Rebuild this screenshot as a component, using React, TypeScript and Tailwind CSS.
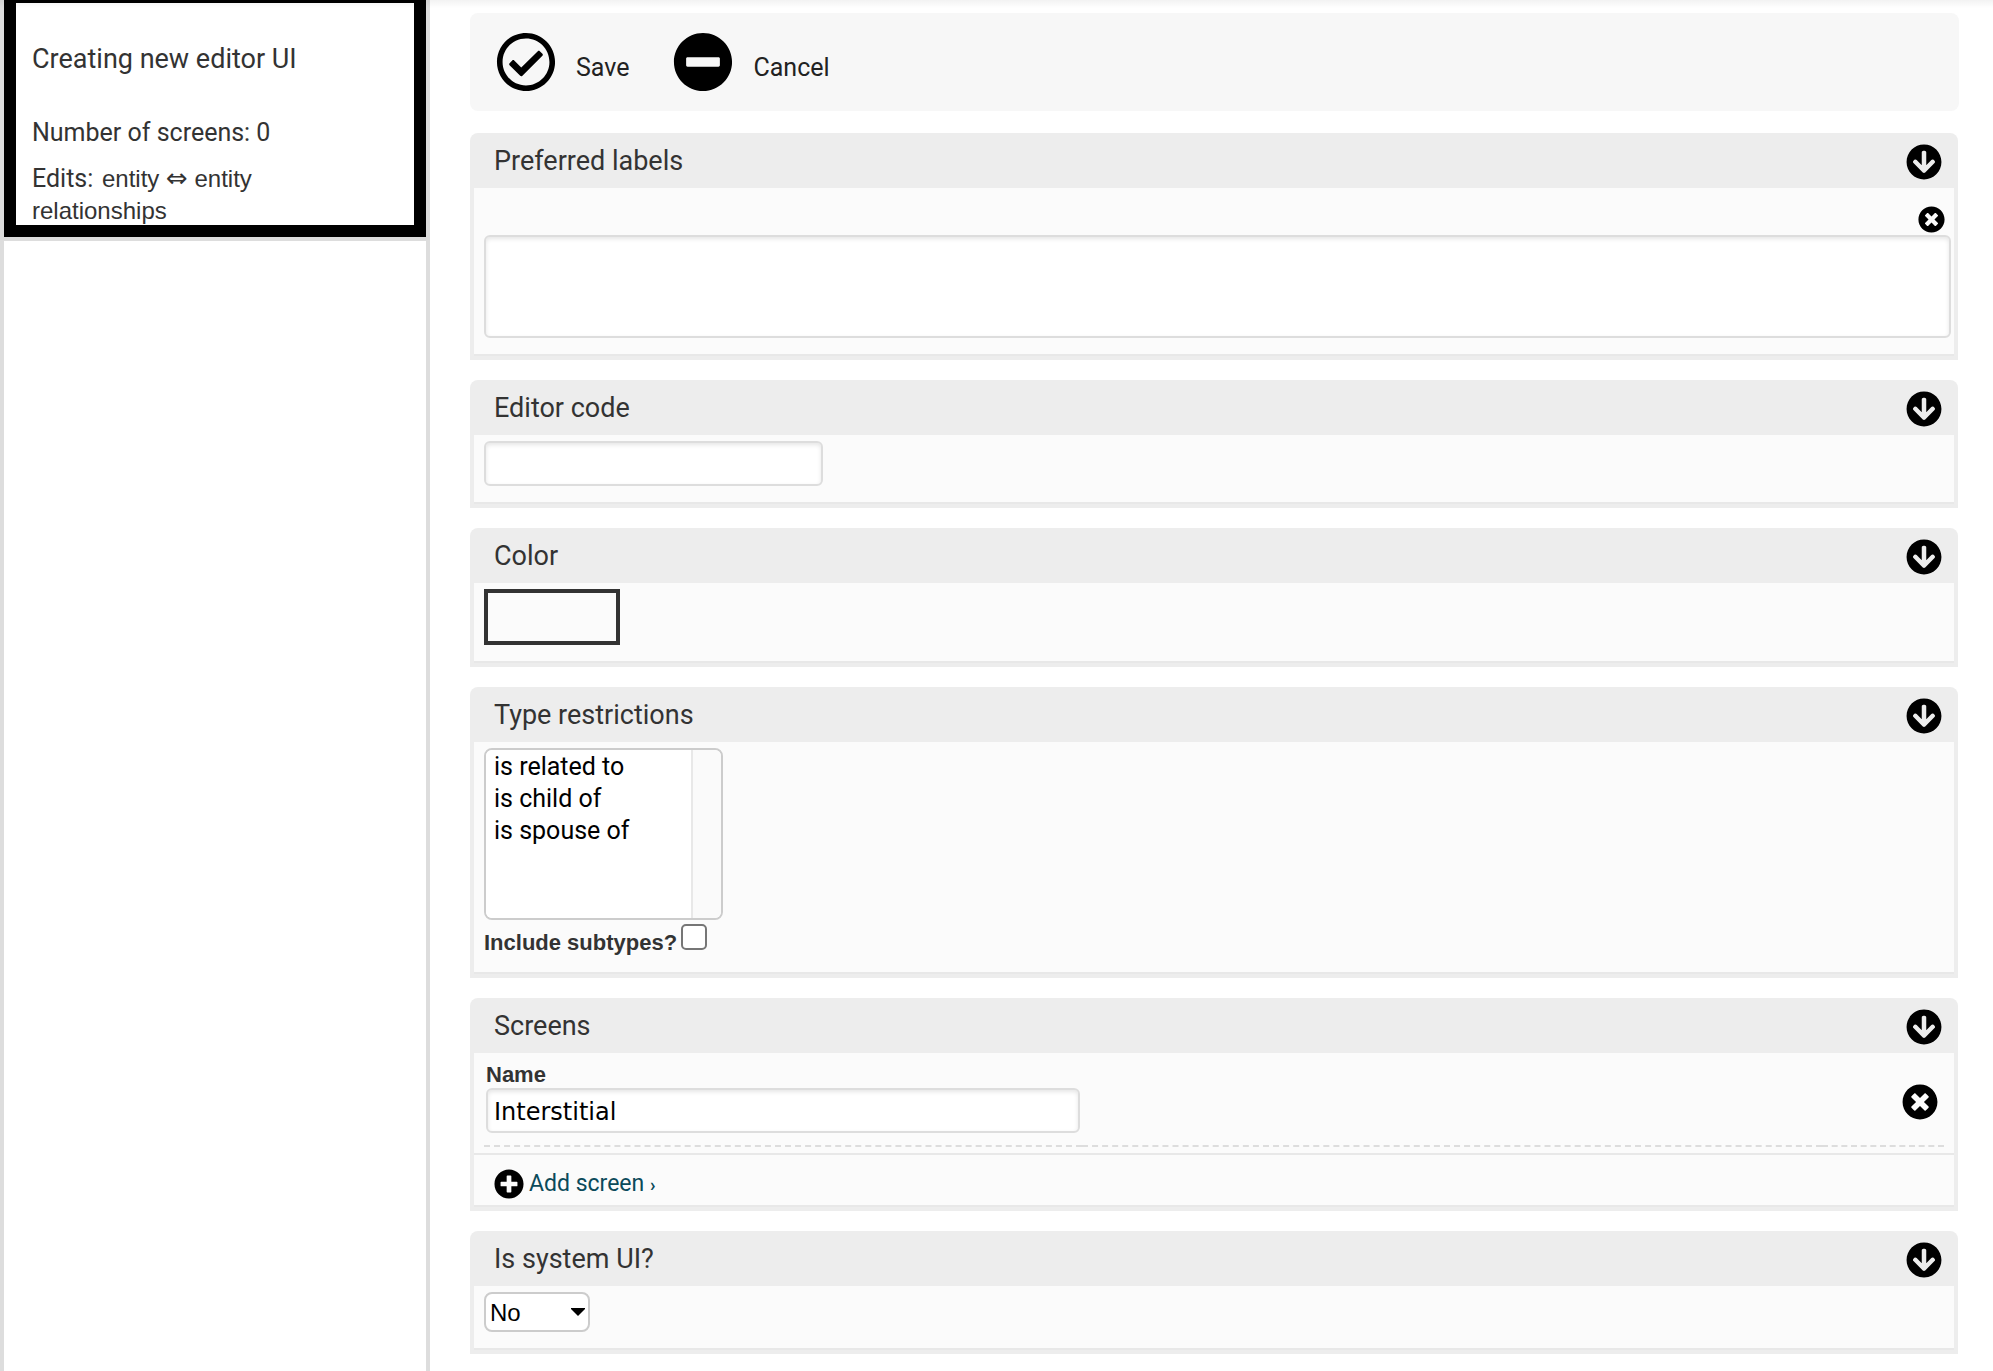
import React from "react";
import {
  FaRegCheckCircle,
  FaMinusCircle,
  FaTimesCircle,
  FaArrowCircleDown,
  FaPlusCircle,
} from "react-icons/fa";

const inputClass =
  "block rounded-[6px] border-2 border-[#dddddd] bg-white text-2xl text-black shadow-[inset_0_2px_4px_rgba(0,0,0,0.1)] outline-none";

function Section({
  title,
  footer,
  children,
}: {
  title: string;
  footer?: React.ReactNode;
  children: React.ReactNode;
}) {
  return (
    <section className="mr-px">
      <header className="flex items-center justify-between rounded-t-lg bg-[#ededed] pt-3 pb-[10px] pr-4 pl-6">
        <h2 className="text-[27px] leading-[33px] text-[#333333]">{title}</h2>
        <button type="button" aria-label={`Toggle ${title}`} className="text-black">
          <FaArrowCircleDown size={36} className="-my-1" />
        </button>
      </header>
      <div className="border-x-4 border-b-4 border-[#ededed] bg-[#fbfbfb]">
        <div className="border-b-2 border-[#e8e8e8] pt-[6px]">{children}</div>
        {footer}
      </div>
    </section>
  );
}

function Toolbar() {
  return (
    <div className="flex gap-11 rounded-lg bg-[#f7f7f7] px-[26px] py-[19px] text-[25px] text-[#222222]">
      <button type="button" className="flex items-center gap-5">
        <FaRegCheckCircle size={60} className="text-black" />
        <span className="pt-3">Save</span>
      </button>
      <button type="button" className="flex items-center gap-5">
        <FaMinusCircle size={60} className="text-black" />
        <span className="pt-3">Cancel</span>
      </button>
    </div>
  );
}

function Sidebar() {
  return (
    <aside className="w-[430px] shrink-0 border-x-4 border-[#dddddd]">
      <div className="border-b-4 border-[#dddddd]">
        <div className="border-12 border-t-3 border-black pt-10 pr-4 pl-4 text-[#333333]">
          <h1 className="text-[27px] leading-8">Creating new editor UI</h1>
          <p className="mt-[42px] text-[25px] leading-8">Number of screens: 0</p>
          <p className="mt-[14px] -mb-0.5 font-['Liberation_Sans',sans-serif] text-2xl leading-8">
            <span className="mr-[2px] font-[Roboto,sans-serif] text-[25px]">Edits:</span> entity{" "}
            <span className="font-['DejaVu_Sans',sans-serif] text-[26px] leading-none">⇔</span>{" "}
            entity
            <br />
            relationships
          </p>
        </div>
      </div>
    </aside>
  );
}

export default function App() {
  return (
    <div className="relative flex min-h-screen bg-white font-[Roboto,sans-serif]">
      <div className="pointer-events-none absolute inset-x-0 top-0 h-2 bg-linear-to-b from-black/5 to-transparent" />
      <Sidebar />
      <main className="flex min-w-0 flex-1 flex-col pt-[13px] pr-[34px] pl-10">
        <Toolbar />
        <form className="mt-[22px] flex flex-col gap-5" onSubmit={(e) => e.preventDefault()}>
          <Section title="Preferred labels">
            <div className="pr-[3px] pb-4 pl-[10px]">
              <div className="flex justify-end pt-3 pr-[6px] pb-[2px]">
                <button type="button" aria-label="Remove label" className="text-black">
                  <FaTimesCircle size={27} />
                </button>
              </div>
              <textarea
                aria-label="Preferred labels"
                className={`${inputClass} h-[103px] w-full resize-none`}
              />
            </div>
          </Section>

          <Section title="Editor code">
            <div className="pb-4 pl-[10px]">
              <input
                type="text"
                aria-label="Editor code"
                className={`${inputClass} h-[45px] w-[339px] px-2`}
              />
            </div>
          </Section>

          <Section title="Color">
            <div className="pb-4 pl-[10px]">
              <button
                type="button"
                aria-label="Choose color"
                className="block h-14 w-[136px] border-4 border-[#333333]"
              />
            </div>
          </Section>

          <Section title="Type restrictions">
            <div className="pb-4 pl-[10px]">
              <div className="flex h-[172px] w-[239px] overflow-hidden rounded-[8px] border-2 border-[#cccccc] bg-white">
                <select
                  multiple
                  aria-label="Type restrictions"
                  className="block h-full min-w-0 flex-1 bg-white pt-px text-[25px] leading-8 text-black outline-none"
                >
                  <option className="px-2 pt-px pb-[2px]">is related to</option>
                  <option className="px-2 pt-px pb-[2px]">is child of</option>
                  <option className="px-2 pt-px pb-[2px]">is spouse of</option>
                </select>
                <div className="w-[30px] border-l-2 border-[#e8e8e8] bg-[#fafafa]" />
              </div>
              <div className="mt-1 flex items-start gap-1">
                <label
                  htmlFor="subtypes"
                  className="pt-[7px] pb-px font-['Liberation_Sans',sans-serif] text-[22px] leading-6 font-bold text-[#333333]"
                >
                  Include subtypes?
                </label>
                <input
                  id="subtypes"
                  type="checkbox"
                  className="size-[26px] appearance-none rounded-[5px] border-2 border-[#767676] bg-white"
                />
              </div>
            </div>
          </Section>

          <Section
            title="Screens"
            footer={
              <div className="border-b-2 border-[#e8e8e8] pt-[14px] pb-[6px] pl-5">
                <a
                  href="#add"
                  className="inline-flex items-center gap-[5px] align-top text-[23px] leading-[30px] text-[#0b4a5a]"
                >
                  <FaPlusCircle size={30} className="text-black" />
                  <span>
                    Add screen <span className="text-lg leading-none font-bold">›</span>
                  </span>
                </a>
              </div>
            }
          >
            <div className="pr-[10px] pb-[6px] pl-[10px]">
              <table className="w-full border-separate border-spacing-0">
                <tbody>
                  <tr>
                    <td className="w-[598px] border-b-2 border-dashed border-[#dddddd] pt-1 pb-3 pl-[2px]">
                      <label
                        htmlFor="screen-name"
                        className="mb-px block font-['Liberation_Sans',sans-serif] text-[22px] leading-6 font-bold text-[#333333]"
                      >
                        Name
                      </label>
                      <input
                        id="screen-name"
                        type="text"
                        defaultValue="Interstitial"
                        className={`${inputClass} h-[45px] w-[594px] px-[6px] pt-[2px] font-['DejaVu_Sans',sans-serif]`}
                      />
                    </td>
                    <td className="border-b-2 border-dashed border-[#dddddd]" />
                    <td className="w-[122px] border-b-2 border-dashed border-[#dddddd] pr-[6px]">
                      <button
                        type="button"
                        aria-label="Remove screen"
                        className="ml-auto block text-black"
                      >
                        <FaTimesCircle size={36} />
                      </button>
                    </td>
                  </tr>
                </tbody>
              </table>
            </div>
          </Section>

          <Section title="Is system UI?">
            <div className="pb-4 pl-[10px]">
              <div className="relative h-10 w-[106px]">
                <select
                  aria-label="Is system UI?"
                  defaultValue="No"
                  className="block h-full w-full appearance-none rounded-[8px] border-2 border-[#cccccc] bg-white pt-[2px] pl-1 font-['Liberation_Sans',sans-serif] text-2xl text-black outline-none"
                >
                  <option>No</option>
                  <option>Yes</option>
                </select>
                <svg
                  viewBox="0 0 14 8"
                  className="pointer-events-none absolute top-4 right-[5px] h-2 w-[14px]"
                >
                  <path d="M0 0h14v1L7 8 0 1z" />
                </svg>
              </div>
            </div>
          </Section>
        </form>
      </main>
    </div>
  );
}
